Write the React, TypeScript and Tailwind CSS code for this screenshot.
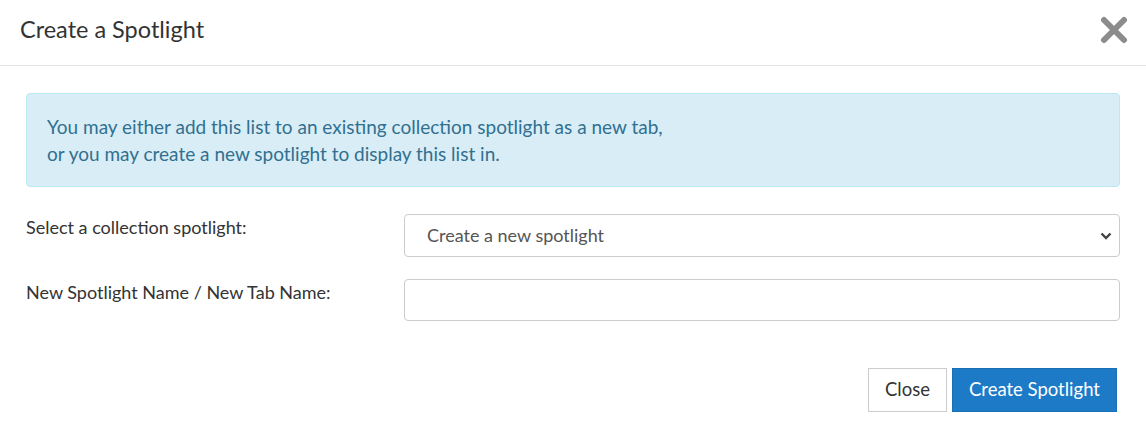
const SpotlightModal: React.FC = () => {
  return (
    <div className="w-[1146px] h-[430px] bg-white font-['Lato','Open_Sans',sans-serif] text-[#333]">
      <header className="flex items-center justify-between h-[66px] pl-5 pr-[18px] border-b border-[#e5e5e5]">
        <h4 className="text-[23.5px] text-[#333] leading-none -mt-[6px]">Create a Spotlight</h4>
        <button className="text-[#8c8c8c] -mt-[6px]" aria-label="close">
          <svg width="28" height="28" viewBox="0 0 28 28">
            <path d="M4 4 L24 24 M24 4 L4 24" stroke="#8c8c8c" strokeWidth="6" strokeLinecap="round" />
          </svg>
        </button>
      </header>

      <div className="px-[26px] pt-[27px]">
        <div className="bg-[#d9edf7] border border-[#bce8f1] rounded-[4px] px-5 py-[19px] text-[#31708f] text-[19px] leading-[27px]">
          You may either add this list to an existing collection spotlight as a new tab,
          <br />
          or you may create a new spotlight to display this list in.
        </div>

        <div className="grid grid-cols-[378px_1fr] gap-y-[22px] mt-[27px]">
          <label className="text-[18px] leading-[27px]">Select a collection spotlight:</label>
          <div className="relative">
            <select className="w-full h-[43px] appearance-none border border-[#ccc] rounded-[4px] pl-[22px] text-[18px] text-[#555] bg-white">
              <option>Create a new spotlight</option>
            </select>
            <svg className="absolute right-[8px] top-[18px]" width="12" height="8" viewBox="0 0 12 8">
              <path d="M1.5 1.5 L6 6 L10.5 1.5" stroke="#444" strokeWidth="2.4" fill="none" />
            </svg>
          </div>

          <label className="text-[18px] leading-[27px]">New Spotlight Name / New Tab Name:</label>
          <input className="w-full h-[42px] border border-[#ccc] rounded-[4px] px-3 text-[18px]" />
        </div>

        <div className="flex justify-end gap-[5px] mt-[47px] pr-[3px]">
          <button className="h-[44px] px-[16px] border border-[#ccc] bg-white text-[18.5px] text-[#333]">Close</button>
          <button className="h-[44px] px-[16px] border border-[#1a6fb5] bg-[#1c7ac7] text-[18.5px] text-white">Create Spotlight</button>
        </div>
      </div>
    </div>
  );
};

export default function App() {
  return <SpotlightModal />;
}
